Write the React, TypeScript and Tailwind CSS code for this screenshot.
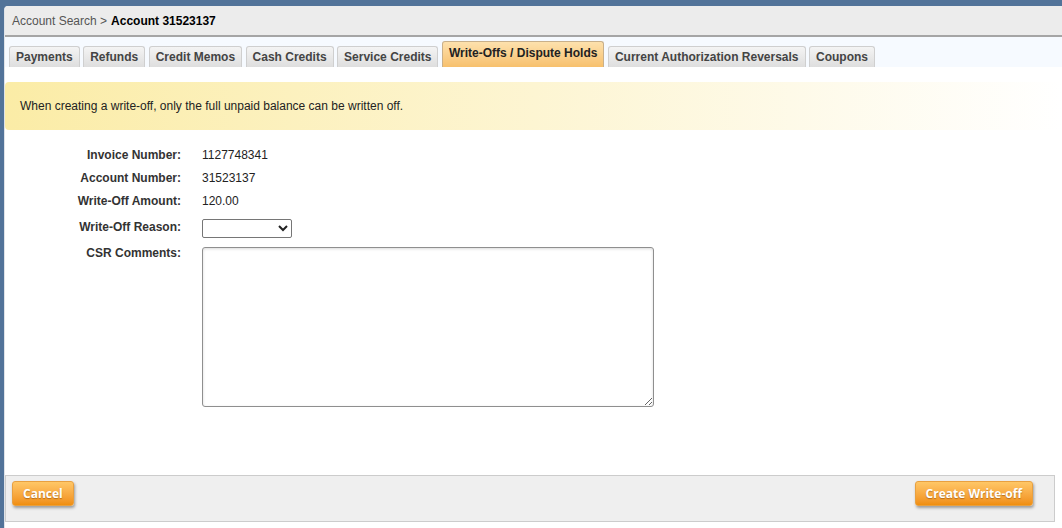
import React from "react";

const tabs = [
  "Payments",
  "Refunds",
  "Credit Memos",
  "Cash Credits",
  "Service Credits",
  "Write-Offs / Dispute Holds",
  "Current Authorization Reversals",
  "Coupons",
];
const activeTab = "Write-Offs / Dispute Holds";

const Label = ({ children }: { children: React.ReactNode }) => (
  <div className="w-[176px] shrink-0 text-right font-bold text-[#333]">{children}</div>
);

const OrangeButton = ({ children }: { children: React.ReactNode }) => (
  <button className="h-[25px] px-[10px] rounded-[3px] bg-gradient-to-b from-[#ffc766] to-[#f08e0c] border border-[#e8a040] text-white text-[12px] font-bold shadow-[1px_2px_3px_rgba(0,0,0,0.35)] [text-shadow:0_1px_1px_rgba(120,60,0,0.5)] font-['Open_Sans',sans-serif]">
    {children}
  </button>
);

export default function App() {
  return (
    <div className="w-[1062px] h-[528px] bg-[#527399] pt-[6px] pl-[4px] overflow-hidden font-['Liberation_Sans',Arial,sans-serif] text-[12px] leading-[14px] text-[#222]">
      <div className="relative h-full bg-white rounded-tl-[4px] border-l border-[#dfe3e8] overflow-hidden flex flex-col">
        {/* breadcrumb */}
        <div className="h-[31px] shrink-0 bg-[#ececec] border-b-2 border-[#a5a5a5] flex items-center pl-[7px]">
          <span className="text-[#555]">Account Search &gt;</span>
          <span className="ml-[4px] font-bold text-black">Account 31523137</span>
        </div>

        {/* tabs */}
        <div className="h-[30px] shrink-0 bg-[#f6faff] flex items-end pl-[4px] gap-[3.5px]">
          {tabs.map((t) =>
            t === activeTab ? (
              <div
                key={t}
                className="h-[26px] px-[6px] pt-[4px] rounded-t-[3px] border border-b-0 border-[#c9b08a] bg-gradient-to-b from-[#fde1ad] to-[#f7c06c] font-bold text-[#222]"
              >
                {t}
              </div>
            ) : (
              <div
                key={t}
                className="h-[21px] px-[6px] flex items-center rounded-t-[3px] border border-b-0 border-[#cfcfcf] bg-gradient-to-b from-[#f4f4f4] to-[#dedede] font-bold text-[#444]"
              >
                {t}
              </div>
            )
          )}
        </div>

        {/* notice */}
        <div className="mt-[15px] h-[48px] shrink-0 rounded-l-[4px] bg-gradient-to-r from-[#fbeca6] via-[#fdf5d2] to-white flex items-center pl-[15px]">
          When creating a write-off, only the full unpaid balance can be written off.
        </div>

        {/* form */}
        <div className="mt-[13px] flex flex-col">
          <div className="flex items-center h-[23px]">
            <Label>Invoice Number:</Label>
            <div className="ml-[21px]">1127748341</div>
          </div>
          <div className="flex items-center h-[23px]">
            <Label>Account Number:</Label>
            <div className="ml-[21px]">31523137</div>
          </div>
          <div className="flex items-center h-[23px]">
            <Label>Write-Off Amount:</Label>
            <div className="ml-[21px]">120.00</div>
          </div>
          <div className="flex items-start">
            <div className="mt-[8px]">
              <Label>Write-Off Reason:</Label>
            </div>
            <select className="ml-[21px] mt-[7px] w-[90px] h-[19px] border border-[#767676] rounded-[2px] bg-white text-[12px]">
              <option></option>
            </select>
          </div>
          <div className="flex items-start mt-[9px]">
            <div className="mt-[-1px]">
              <Label>CSR Comments:</Label>
            </div>
            <textarea className="ml-[21px] w-[452px] h-[160px] border border-[#8f8f8f] rounded-[3px] shadow-[inset_0_1px_3px_rgba(0,0,0,0.15)] resize" />
          </div>
        </div>

        <div className="flex-1" />

        {/* footer */}
        <div className="mb-[6px] mr-[7px] h-[47px] shrink-0 bg-[#efefef] border border-[#cccccc] flex items-start justify-between pl-[6px] pr-[21px] pt-[5px]">
          <OrangeButton>Cancel</OrangeButton>
          <OrangeButton>Create Write-off</OrangeButton>
        </div>
      </div>
    </div>
  );
}
